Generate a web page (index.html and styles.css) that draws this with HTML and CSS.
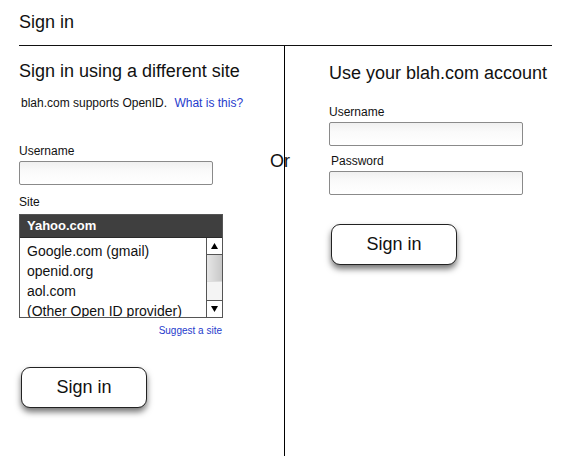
FILE: index.html
```html
<!DOCTYPE html>
<html lang="en">
<head>
    <meta charset="UTF-8">
    <meta name="viewport" content="width=device-width, initial-scale=1.0">
    <title>Sign in</title>
    <link rel="stylesheet" href="styles.css">
</head>
<body>
    <div class="page">
        <h1 class="title">Sign in</h1>

        <div class="columns">
            <!-- OpenID side -->
            <div class="col col-left">
                <h2>Sign in using a different site</h2>
                <p class="note">blah.com supports OpenID. <a href="#" class="link">What is this?</a></p>

                <label class="label label-user">Username</label>
                <input type="text" class="field">

                <label class="label label-site">Site</label>
                <div class="listbox">
                    <div class="listbox-selected">Yahoo.com</div>
                    <div class="listbox-body">
                        <ul class="listbox-items">
                            <li>Google.com (gmail)</li>
                            <li>openid.org</li>
                            <li>aol.com</li>
                            <li>(Other Open ID provider)</li>
                        </ul>
                        <div class="scrollbar">
                            <div class="scroll-btn scroll-up">
                                <svg width="7" height="6" viewBox="0 0 7 6"><path d="M3.5 0 L7 6 L0 6 Z" fill="#000"/></svg>
                            </div>
                            <div class="scroll-track">
                                <div class="scroll-thumb"></div>
                            </div>
                            <div class="scroll-btn scroll-down">
                                <svg width="7" height="6" viewBox="0 0 7 6"><path d="M0 0 L7 0 L3.5 6 Z" fill="#000"/></svg>
                            </div>
                        </div>
                    </div>
                </div>
                <div class="suggest"><a href="#" class="link">Suggest a site</a></div>

                <button class="btn btn-left">Sign in</button>
            </div>

            <span class="or">Or</span>

            <!-- local account side -->
            <div class="col col-right">
                <h2 class="h2-right">Use your blah.com account</h2>
                <label class="label label-ruser">Username</label>
                <input type="text" class="field">
                <label class="label label-pass">Password</label>
                <input type="password" class="field">
                <button class="btn btn-right">Sign in</button>
            </div>
        </div>
    </div>
</body>
</html>
```

FILE: styles.css
```css
body {
    font-family: "Liberation Sans", Arial, sans-serif;
    color: #111;
    background: #fff;
    margin: 0;
    padding: 0;
}
.page {
    margin-left: 19px;
    width: 533px;
}
.title {
    font-size: 18px;
    font-weight: normal;
    line-height: 22px;
    margin: 0;
    padding: 11px 0 12px 0;
    border-bottom: 1px solid #111;
}
.columns {
    display: grid;
    grid-template-columns: 266px 1fr;
    height: 410px;
    position: relative;
}
.col {
    display: flex;
    flex-direction: column;
    align-items: flex-start;
}
.col-left {
    border-right: 1px solid #000;
}
.col-right {
    padding-left: 44px;
}
h2 {
    font-size: 18px;
    font-weight: normal;
    line-height: 22px;
    margin: 14px 0 0 0;
}
.h2-right {
    margin-top: 16px;
}
.note {
    font-size: 12px;
    line-height: 15px;
    margin: 14px 0 0 2px;
}
.link {
    color: #1f3bcc;
    text-decoration: none;
}
.note .link {
    margin-left: 4px;
}
.label {
    font-size: 12px;
    line-height: 15px;
}
.label-user {
    margin-top: 33px;
}
.label-site {
    margin-top: 10px;
}
.label-ruser {
    margin-top: 21px;
}
.label-pass {
    margin: 8px 0 0 2px;
}
.field {
    box-sizing: border-box;
    width: 194px;
    height: 24px;
    margin: 2px 0 0 0;
    border: 1px solid #8a8a8a;
    border-radius: 2px;
    background: linear-gradient(#f0f0f0, #fafafa 40%, #fff);
}
.listbox {
    box-sizing: border-box;
    width: 204px;
    height: 104px;
    margin-top: 4px;
    border: 1px solid #555;
    display: flex;
    flex-direction: column;
    overflow: hidden;
}
.listbox-selected {
    background: #3f3f3f;
    color: #fff;
    font-size: 13px;
    font-weight: bold;
    line-height: 22px;
    height: 22px;
    padding-left: 7px;
    border-bottom: 1px solid #2a2a2a;
}
.listbox-body {
    flex: 1;
    display: flex;
    min-height: 0;
}
.listbox-items {
    flex: 1;
    list-style: none;
    margin: 0;
    padding: 3px 0 0 7px;
    font-size: 14px;
    line-height: 20px;
    overflow: hidden;
}
.scrollbar {
    width: 15px;
    border-left: 1px solid #555;
    display: flex;
    flex-direction: column;
}
.scroll-btn {
    height: 16px;
    display: flex;
    align-items: center;
    justify-content: center;
    background: #fff;
}
.scroll-up {
    border-bottom: 1px solid #555;
}
.scroll-down {
    border-top: 1px solid #555;
}
.scroll-track {
    flex: 1;
    background: #f4f4f4;
}
.scroll-thumb {
    height: 26px;
    background: linear-gradient(to right, #e6e6e6, #c8c8c8);
    border-bottom: 1px solid #ddd;
}
.suggest {
    width: 203px;
    text-align: right;
    font-size: 10px;
    line-height: 12px;
    margin-top: 7px;
}
.btn {
    box-sizing: border-box;
    width: 126px;
    height: 41px;
    background: #fff;
    border: 1px solid #222;
    border-radius: 9px;
    box-shadow: 0 4px 6px rgba(0, 0, 0, 0.55);
    font-family: "Liberation Sans", Arial, sans-serif;
    font-size: 18px;
    color: #111;
    padding: 0;
}
.btn-left {
    margin: 30px 0 0 2px;
}
.btn-right {
    margin: 29px 0 0 2px;
}
.or {
    position: absolute;
    left: 251px;
    top: 104px;
    font-size: 18px;
    line-height: 22px;
}
```
